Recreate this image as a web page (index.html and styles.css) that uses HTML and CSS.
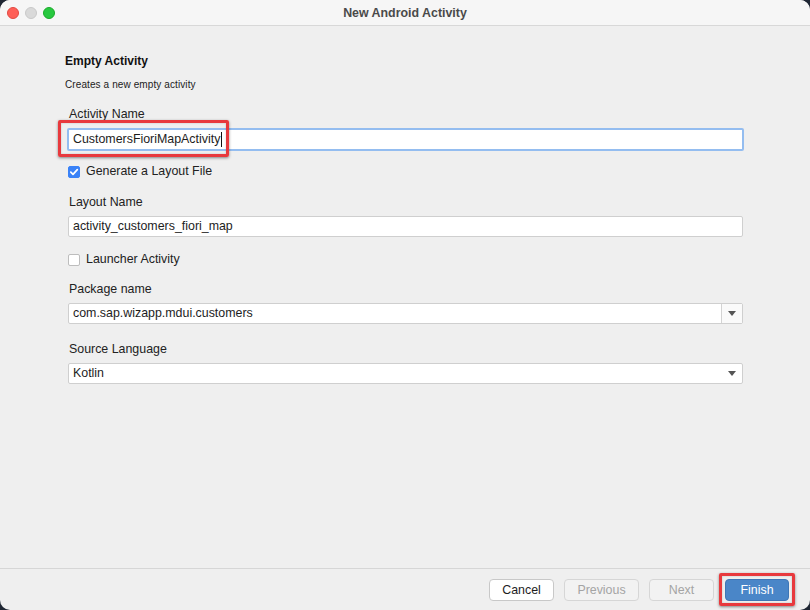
FILE: index.html
```html
<!DOCTYPE html>
<html>
<head>
<meta charset="utf-8">
<link rel="stylesheet" href="styles.css">
</head>
<body>
<div class="window">
  <div class="titlebar">
    <div class="lights">
      <span class="light red"></span>
      <span class="light gray"></span>
      <span class="light green"></span>
    </div>
    <div class="title">New Android Activity</div>
  </div>
  <div class="content">
    <div class="heading">Empty Activity</div>
    <div class="desc">Creates a new empty activity</div>

    <div class="label first">Activity Name</div>
    <div class="field-wrap">
      <div class="input focused"><span>CustomersFioriMapActivity</span><span class="caret"></span></div>
      <div class="highlight hl-name"></div>
    </div>

    <label class="check check-first"><span class="box checked"><svg width="10" height="10" viewBox="0 0 10 10"><path d="M1.8 5.2 L4 7.4 L8.3 2.6" fill="none" stroke="#fff" stroke-width="1.7" stroke-linecap="round" stroke-linejoin="round"/></svg></span>Generate a Layout File</label>

    <div class="label after-check">Layout Name</div>
    <div class="input">activity_customers_fiori_map</div>

    <label class="check check-second"><span class="box"></span>Launcher Activity</label>

    <div class="label after-check2">Package name</div>
    <div class="input combo"><span class="combo-text">com.sap.wizapp.mdui.customers</span><span class="combo-btn"><span class="arrow"></span></span></div>

    <div class="label">Source Language</div>
    <div class="input select"><span class="combo-text">Kotlin</span><span class="arrow"></span></div>
  </div>
  <div class="footer">
    <button class="btn">Cancel</button>
    <button class="btn disabled">Previous</button>
    <button class="btn disabled">Next</button>
    <div class="finish-wrap">
      <button class="btn primary">Finish</button>
      <div class="highlight hl-finish"></div>
    </div>
  </div>
</div>
</body>
</html>
```

FILE: styles.css
```css
html, body {
  margin: 0;
  padding: 0;
  width: 810px;
  height: 610px;
  background: #1f2633;
  overflow: hidden;
}
.window {
  width: 810px;
  height: 610px;
  border-radius: 10px;
  background: #efefef;
  overflow: hidden;
  display: flex;
  flex-direction: column;
  font-family: "Liberation Sans", Arial, sans-serif;
  color: #1d1d1d;
}
.titlebar {
  height: 25px;
  background: #f6f6f6;
  border-bottom: 1px solid #d8d8d8;
  position: relative;
  display: flex;
  align-items: center;
  justify-content: center;
  flex-shrink: 0;
}
.lights {
  position: absolute;
  left: 7px;
  top: 7px;
  display: flex;
  gap: 6px;
}
.light {
  width: 12px;
  height: 12px;
  border-radius: 50%;
  display: block;
  box-sizing: border-box;
}
.light.red { background: #fe5f57; border: 0.5px solid #e14942; }
.light.gray { background: #d9d9d9; border: 0.5px solid #c8c8c8; }
.light.green { background: #28c840; border: 0.5px solid #1aab29; }
.title {
  font-weight: bold;
  font-size: 12.4px;
  color: #4a4a4a;
}
.content {
  flex: 1;
  padding: 28px 67px 0 65px;
  display: flex;
  flex-direction: column;
}
.heading {
  font-weight: bold;
  font-size: 12px;
  line-height: 14px;
  color: #111;
}
.desc {
  font-size: 10px;
  line-height: 12px;
  margin-top: 11px;
  color: #222;
  letter-spacing: 0.1px;
}
.label {
  font-size: 12.4px;
  line-height: 15px;
  margin-left: 4px;
  margin-top: 18px;
  margin-bottom: 6px;
  color: #222;
}
.label.first { margin-top: 16px; margin-bottom: 7px; }
.label.after-check { margin-top: 16px; }
.label.after-check2 { margin-top: 15px; }
.field-wrap { position: relative; margin-left: 3px; }
.input {
  margin-left: 3px;
  height: 21px;
  box-sizing: border-box;
  background: #fff;
  border: 1px solid #cfcfcf;
  border-radius: 2px;
  font-size: 12.4px;
  line-height: 19px;
  padding-left: 4px;
  color: #1d1d1d;
  display: flex;
  align-items: center;
}
.field-wrap .input { margin-left: 0; }
.input.focused {
  border: 2px solid #94bdf0;
  height: 23px;
  margin-top: -1px;
  margin-left: -1px;
  margin-right: -1px;
  padding-left: 4px;
}
.caret {
  display: inline-block;
  width: 1px;
  height: 15px;
  background: #111;
  margin-left: 1px;
}
.highlight {
  position: absolute;
  border: 3px solid #e8393d;
  border-radius: 2px;
  box-shadow: 0 1px 3px rgba(0,0,0,0.45), inset 0 0 2px rgba(0,0,0,0.2);
  pointer-events: none;
}
.hl-name {
  left: -10px;
  top: -9px;
  width: 165px;
  height: 31px;
}
.check {
  display: flex;
  align-items: center;
  font-size: 12.4px;
  line-height: 15px;
  margin-left: 3px;
  color: #222;
  gap: 6px;
}
.check-first { margin-top: 13px; }
.check-second { margin-top: 15px; }
.box {
  width: 12px;
  height: 12px;
  box-sizing: border-box;
  border: 1px solid #bdbdbd;
  border-radius: 2px;
  background: #fff;
  display: flex;
  align-items: center;
  justify-content: center;
}
.box.checked {
  background: #3a82f7;
  border-color: #3a82f7;
}
.combo-text { flex: 1; }
.combo-btn {
  width: 20px;
  height: 19px;
  border-left: 1px solid #d3d3d3;
  background: #fafafa;
  display: flex;
  align-items: center;
  justify-content: center;
}
.arrow {
  width: 0;
  height: 0;
  border-left: 4px solid transparent;
  border-right: 4px solid transparent;
  border-top: 5px solid #555;
}
.select { padding-right: 6px; }
.footer {
  height: 41px;
  border-top: 1px solid #d6d6d6;
  display: flex;
  align-items: center;
  justify-content: flex-end;
  padding-right: 21px;
  gap: 10px;
  flex-shrink: 0;
}
.btn {
  height: 22px;
  box-sizing: border-box;
  border: 1px solid #c8c8c8;
  border-radius: 4px;
  background: #fff;
  font-family: "Liberation Sans", Arial, sans-serif;
  font-size: 12.4px;
  color: #1d1d1d;
  padding: 0;
  width: 65px;
}
.btn.disabled {
  width: 75px;
  background: #f2f2f2;
  color: #a4a4a4;
  border-color: #d6d6d6;
}
.btn.disabled + .btn.disabled { width: 65px; }
.finish-wrap { position: relative; margin-left: 1px; }
.btn.primary {
  width: 64px;
  background: #4a86c8;
  border-color: #3e76b5;
  color: #fff;
  display: block;
}
.hl-finish {
  left: -6px;
  top: -6px;
  width: 70px;
  height: 27px;
}
```
